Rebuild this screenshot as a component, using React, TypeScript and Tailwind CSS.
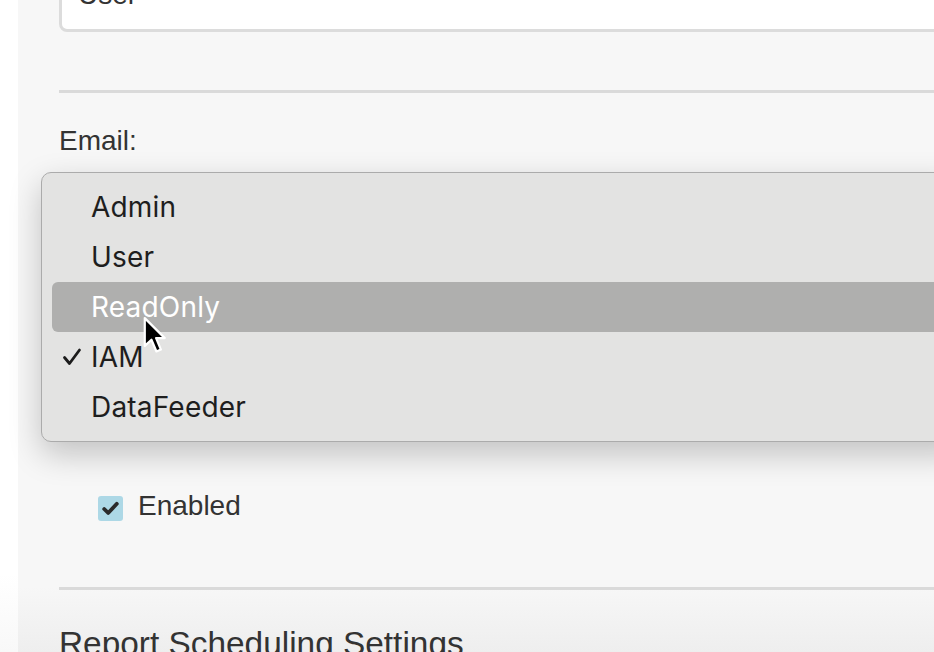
import React from "react";

const pageFont = { fontFamily: '"Liberation Sans", Arial, sans-serif' };
const menuFont = { fontFamily: 'Inter, "Noto Sans", sans-serif' };

function Check() {
  return (
    <svg width="20" height="20" viewBox="0 0 20 20" className="block">
      <path d="M2.5 10.5 L7.5 16.5 L17.5 3" fill="none" stroke="#1c1c1c" strokeWidth="2.8" strokeLinecap="round" strokeLinejoin="round" />
    </svg>
  );
}

function Cursor() {
  return (
    <svg width="30" height="40" viewBox="0 0 26 36" className="block">
      <path d="M2 1 L2 26 L8 20.5 L12.5 31 L16.5 29.3 L12.2 19 L20 19 Z" fill="#000" stroke="#fff" strokeWidth="2" strokeLinejoin="round" />
    </svg>
  );
}

export default function App() {
  const items = ["Admin", "User", "ReadOnly", "IAM", "DataFeeder"];
  return (
    <div className="w-[934px] h-[652px] overflow-hidden flex bg-white" style={pageFont}>
      <div className="w-[18px] shrink-0 bg-[linear-gradient(to_bottom,#ffffff_0%,#ffffff_88%,#f8f8f8_100%)]" />
      <div className="relative flex-1 bg-[linear-gradient(to_bottom,#f7f7f7_0%,#f7f7f7_90%,#eeeeee_100%)] pl-[41px] text-[#333333]">
        <div className="flex flex-col mr-[-30px]">
          <div className="mt-[-28px] h-[60px] border-[3px] border-[#dcdcdc] rounded-[8px] bg-white pl-[16px] pt-[6px] text-[28px] leading-[28px]">
            User
          </div>
          <div className="mt-[58px] h-[3px] bg-[#dadada]" />
          <div className="mt-[34px] text-[28px] leading-[28px]">Email:</div>
          <div className="h-[337px]" />
          <div className="flex items-start ml-[39px] gap-[15px]">
            <div className="mt-[4px] w-[25px] h-[25px] rounded-[3px] bg-[#add8e6] flex items-center justify-center">
              <svg width="17" height="15" viewBox="0 0 17 15" className="block">
                <path d="M2.2 8 L6.2 12 L14.8 2.8" fill="none" stroke="#2a2a2a" strokeWidth="3.8" strokeLinecap="round" strokeLinejoin="round" />
              </svg>
            </div>
            <div className="text-[28px] leading-[28px]">Enabled</div>
          </div>
          <div className="mt-[66px] h-[3px] bg-[#dadada]" />
          <div className="mt-[37px] text-[33.4px] leading-[33px] whitespace-nowrap">Report Scheduling Settings</div>
        </div>

        <div
          className="absolute left-[23px] top-[172px] right-[-30px] h-[270px] rounded-[10px] border border-[#ababab] bg-[#e3e3e2] shadow-[0_12px_32px_rgba(0,0,0,0.22)] pt-[9px] px-[10px]"
          style={menuFont}
        >
          {items.map((it) => {
            const active = it === "ReadOnly";
            return (
              <div
                key={it}
                className={
                  "relative h-[50px] flex items-center pl-[39px] rounded-[6px] text-[28px] leading-[28px] tracking-[0.2px] " +
                  (active ? "bg-[#afafae] text-white" : "text-[#1e1e1e]")
                }
              >
                {it === "IAM" && (
                  <div className="absolute left-[10px] top-[15px]">
                    <Check />
                  </div>
                )}
                {it}
              </div>
            );
          })}
          <div className="absolute left-[100px] top-[144px]">
            <Cursor />
          </div>
        </div>
      </div>
    </div>
  );
}
